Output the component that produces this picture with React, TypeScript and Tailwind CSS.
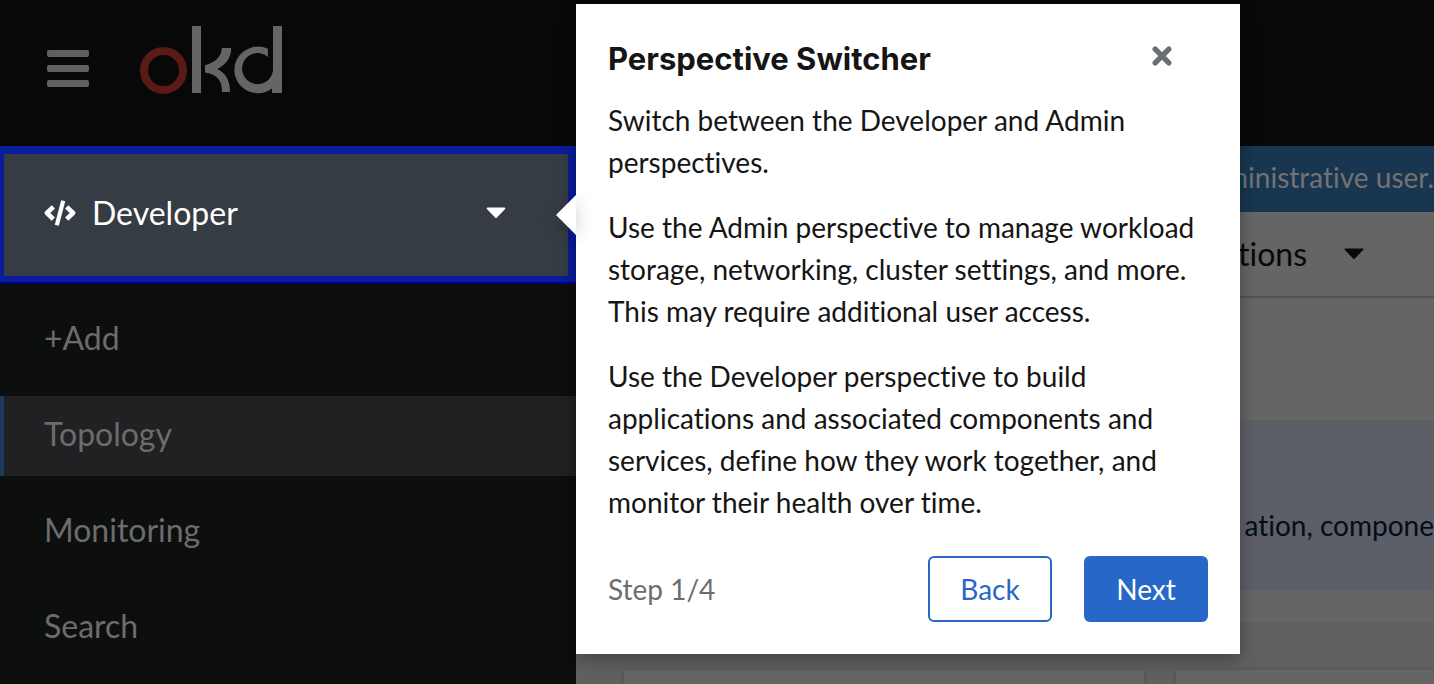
import type { ReactNode } from 'react';

function Logo() {
  return (
    <svg viewBox="0 0 143 69" className="h-[69px] w-[143px]" role="img" aria-label="okd">
      <circle cx="23.5" cy="44.5" r="19.5" fill="none" stroke="#5a1a16" strokeWidth="8" />
      <g fill="#656565">
        <path d="M52 0h9v67h-9z" />
        <path d="M65 39.200C74 37 81.800 31 81.800 22H91.200C91.200 31.500 86 38.500 77.300 43C85 47 90 53 90 66H82C82 55 78 48.500 65 46.500Z" />
        <path d="M133 0H142V67H132V62.500A23.500 23.300 0 1 1 127.900 22.800V31A15.500 15.500 0 1 0 133 44.500Z" />
      </g>
    </svg>
  );
}

function CodeIcon() {
  return (
    <svg viewBox="0 0 32 26" className="h-[26px] w-8 shrink-0" fill="none" stroke="#fff" aria-hidden="true">
      <path d="M9.300 6.800L3 13L9.300 19.200M22.700 6.800L29 13L22.700 19.200" strokeWidth="4.600" strokeLinejoin="round" />
      <path d="M19.200 .8L12.800 25.200" strokeWidth="4.200" />
    </svg>
  );
}

function Caret() {
  return (
    <svg viewBox="0 0 20 12" className="h-3 w-5 shrink-0" fill="currentColor" aria-hidden="true">
      <path d="M1.300 0.500H18.700Q20 1 19.100 2L10.700 10.700Q10 11.300 9.300 10.700L.9 2Q0 1 1.300 .5Z" />
    </svg>
  );
}

function NavItem({ children, active = false }: { children: ReactNode; active?: boolean }) {
  return (
    <li>
      <a
        href="#"
        aria-current={active ? 'page' : undefined}
        className={
          active
            ? 'flex h-20 items-center border-l-4 border-[#1c3b5c] bg-[#212123] pb-1 pl-10 text-[#6c6c6c]'
            : 'flex h-20 items-center border-l-4 border-transparent pb-1 pl-10 text-[#6c6c6c]'
        }
      >
        {children}
      </a>
    </li>
  );
}

function Tour() {
  return (
    <section
      role="dialog"
      aria-labelledby="tour-title"
      className="absolute top-1 left-[576px] w-[664px] bg-white p-8 text-[28px] leading-[42px] text-[#151515] shadow-[0_8px_16px_rgba(3,3,3,0.2),0_0_12px_rgba(3,3,3,0.15)]"
    >
      <span className="absolute top-[191px] -left-5 drop-shadow-[0_4px_8px_rgba(3,3,3,0.2)]">
        <span className="block h-10 w-5 bg-white [clip-path:polygon(100%_0,100%_100%,0_50%)]" />
      </span>
      <header className="flex items-start justify-between pr-9">
        <h2 id="tour-title" className="font-[Inter,sans-serif] text-[31px] leading-[46px] font-bold">
          Perspective Switcher
        </h2>
        <button type="button" aria-label="Close" className="mt-2.5 text-[#6a6e73]">
          <svg viewBox="0 0 20 20" className="size-5" fill="none" stroke="currentColor" strokeWidth="5.400" strokeLinecap="round">
            <path d="M3.200 3.200L16.800 16.800M16.800 3.200L3.200 16.800" />
          </svg>
        </button>
      </header>
      <div className="mt-[17px] flex flex-col gap-[23px]">
        <p>
          Switch between the Developer and Admin
          <br />
          perspectives.
        </p>
        <p>
          Use the Admin perspective to manage workload
          <br />
          storage, networking, cluster settings, and more.
          <br />
          This may require additional user access.
        </p>
        <p>
          Use the Developer perspective to build
          <br />
          applications and associated components and
          <br />
          services, define how they work together, and
          <br />
          monitor their health over time.
        </p>
      </div>
      <footer className="mt-[33px] flex items-center gap-8">
        <span className="mr-auto text-[#6a6e73]">Step 1/4</span>
        <button type="button" className="h-[66px] w-[124px] rounded-md border-2 border-[#2667c8] text-[#2667c8]">
          Back
        </button>
        <button type="button" className="h-[66px] w-[124px] rounded-md bg-[#2667c8] text-white">
          Next
        </button>
      </footer>
    </section>
  );
}

export default function App() {
  return (
    <div className="relative flex h-screen flex-col overflow-hidden bg-[#656565] font-[Lato,sans-serif] [font-variant-ligatures:none]">
      <header className="flex h-[146px] shrink-0 items-start bg-[#080808] pl-[47px]">
        <button type="button" aria-label="Toggle navigation" className="mt-[50px] flex flex-col gap-2">
          <span className="h-[7px] w-[42px] rounded-xs bg-[#606060]" />
          <span className="h-[7px] w-[42px] rounded-xs bg-[#606060]" />
          <span className="h-[7px] w-[42px] rounded-xs bg-[#606060]" />
        </button>
        <a href="#" className="mt-[26px] ml-[51px]">
          <Logo />
        </a>
      </header>

      <div className="flex min-h-0 flex-1">
        <aside className="w-[576px] shrink-0 bg-[#0d0f0e] text-[32px] leading-[48px]">
          <div className="border-b-2 border-[#00008b]">
            <button
              type="button"
              className="flex h-[136px] w-full items-center border-t-8 border-r-8 border-b-6 border-l-4 border-[#0a1b9b] bg-[#363c43] pr-[62px] pb-1 pl-10 text-white"
            >
              <CodeIcon />
              <span className="ml-4">Developer</span>
              <span className="ml-auto">
                <Caret />
              </span>
            </button>
          </div>
          <nav aria-label="Main">
            <ul className="flex flex-col gap-4 pt-4">
              <NavItem>+Add</NavItem>
              <NavItem active>Topology</NavItem>
              <NavItem>Monitoring</NavItem>
              <NavItem>Search</NavItem>
            </ul>
          </nav>
        </aside>

        <main className="flex min-w-0 flex-1 flex-col overflow-hidden text-[28px] leading-[42px] whitespace-nowrap">
          <div className="flex h-[66px] shrink-0 items-center justify-end bg-[#18364f] pb-1 text-[#737373]">
            administrative user.
          </div>
          <div className="flex h-[86px] shrink-0 items-center justify-end border-b-2 border-[#525252] pr-[70px] text-[32px] text-[#080808]">
            <button type="button" className="flex items-center gap-[37px]">
              applications
              <Caret />
            </button>
          </div>
          <div className="mt-[122px] flex h-[170px] shrink-0 items-center justify-end bg-[#5c6066] pt-10 text-[#010d1a]">
            ation, compone
          </div>
          <div className="mt-8 flex flex-1 gap-8 bg-[#606060] pt-12 pl-12">
            <div className="w-[520px] shrink-0 bg-[#656565] shadow-[0_0_4px_rgba(3,3,3,0.2)]" />
            <div className="flex-1 bg-[#656565] shadow-[0_0_4px_rgba(3,3,3,0.2)]" />
          </div>
        </main>
      </div>

      <Tour />
    </div>
  );
}
